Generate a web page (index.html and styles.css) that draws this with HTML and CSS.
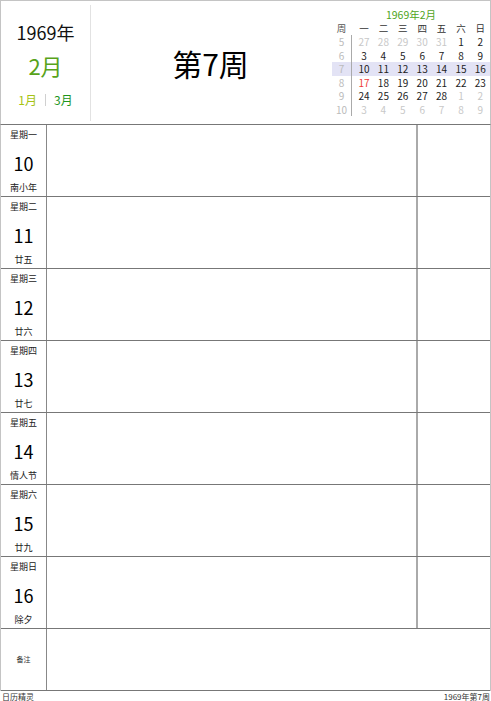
FILE: index.html
```html
<!DOCTYPE html>
<html lang="zh">
<head>
<meta charset="utf-8">
<title>1969年第7周</title>
<link rel="stylesheet" href="styles.css">
</head>
<body>
<div class="page">
  <div class="header">
    <div class="month-box">
      <div class="year">1969年</div>
      <div class="month">2月</div>
      <div class="nav"><span class="prev">1月</span><span class="sep"></span><span class="next">3月</span></div>
    </div>
    <div class="week-title">第7周</div>
    <div class="mini-cal">
      <div class="cal-title">1969年2月</div>
      <div class="cal-row cal-head"><span class="wk">周</span><span class="d">一</span><span class="d">二</span><span class="d">三</span><span class="d">四</span><span class="d">五</span><span class="d">六</span><span class="d">日</span></div>
      <div class="cal-row"><span class="wk">5</span><span class="d out">27</span><span class="d out">28</span><span class="d out">29</span><span class="d out">30</span><span class="d out">31</span><span class="d">1</span><span class="d">2</span></div>
      <div class="cal-row"><span class="wk">6</span><span class="d">3</span><span class="d">4</span><span class="d">5</span><span class="d">6</span><span class="d">7</span><span class="d">8</span><span class="d">9</span></div>
      <div class="cal-row current"><span class="wk">7</span><span class="d">10</span><span class="d">11</span><span class="d">12</span><span class="d">13</span><span class="d">14</span><span class="d">15</span><span class="d">16</span></div>
      <div class="cal-row"><span class="wk">8</span><span class="d holiday">17</span><span class="d">18</span><span class="d">19</span><span class="d">20</span><span class="d">21</span><span class="d">22</span><span class="d">23</span></div>
      <div class="cal-row"><span class="wk">9</span><span class="d">24</span><span class="d">25</span><span class="d">26</span><span class="d">27</span><span class="d">28</span><span class="d out">1</span><span class="d out">2</span></div>
      <div class="cal-row"><span class="wk">10</span><span class="d out">3</span><span class="d out">4</span><span class="d out">5</span><span class="d out">6</span><span class="d out">7</span><span class="d out">8</span><span class="d out">9</span></div>
    </div>
  </div>
  <div class="table">
    <div class="row">
      <div class="label"><div class="wd">星期一</div><div class="num">10</div><div class="lunar">南小年</div></div>
      <div class="main"></div><div class="side"></div>
    </div>
    <div class="row">
      <div class="label"><div class="wd">星期二</div><div class="num">11</div><div class="lunar">廿五</div></div>
      <div class="main"></div><div class="side"></div>
    </div>
    <div class="row">
      <div class="label"><div class="wd">星期三</div><div class="num">12</div><div class="lunar">廿六</div></div>
      <div class="main"></div><div class="side"></div>
    </div>
    <div class="row">
      <div class="label"><div class="wd">星期四</div><div class="num">13</div><div class="lunar">廿七</div></div>
      <div class="main"></div><div class="side"></div>
    </div>
    <div class="row">
      <div class="label"><div class="wd">星期五</div><div class="num">14</div><div class="lunar">情人节</div></div>
      <div class="main"></div><div class="side"></div>
    </div>
    <div class="row">
      <div class="label"><div class="wd">星期六</div><div class="num">15</div><div class="lunar">廿九</div></div>
      <div class="main"></div><div class="side"></div>
    </div>
    <div class="row">
      <div class="label"><div class="wd">星期日</div><div class="num">16</div><div class="lunar">除夕</div></div>
      <div class="main"></div><div class="side"></div>
    </div>
    <div class="row notes">
      <div class="label"><div class="note-label">备注</div></div>
      <div class="main"></div>
    </div>
  </div>
  <div class="footer"><span>日历精灵</span><span>1969年第7周</span></div>
</div>
</body>
</html>
```
FILE: styles.css
```css
* { box-sizing: border-box; }
html, body { margin: 0; padding: 0; background: #fff; }
body {
  font-family: "Noto Sans CJK SC", "Noto Sans", sans-serif;
  color: #111;
  width: 491px;
  height: 701px;
  overflow: hidden;
}
.page {
  width: 491px;
}
.header {
  display: flex;
  height: 124px;
  border: 1px solid #c4c4c4;
  border-bottom: none;
}
.month-box {
  width: 90px;
  margin: 4px 0 3px;
  border-right: 1px solid #e2e2e2;
  display: flex;
  flex-direction: column;
  align-items: center;
  padding-top: 15px;
}
.year {
  font-size: 18px;
  line-height: 24px;
  color: #111;
}
.month {
  font-size: 22px;
  line-height: 30px;
  margin-top: 6px;
  color: #58a31a;
}
.nav {
  display: flex;
  align-items: center;
  margin-top: 12px;
  font-size: 12px;
  line-height: 16px;
}
.prev { color: #a6c414; }
.next { color: #1d961d; }
.sep {
  display: inline-block;
  width: 1px;
  height: 12px;
  background: #d0d0d0;
  margin: 0 8px;
}
.week-title {
  flex: 1;
  display: flex;
  align-items: center;
  justify-content: center;
  font-size: 30px;
  padding-top: 1px;
  padding-right: 2px;
  color: #000;
}
.mini-cal {
  width: 158px;
  padding-top: 6px;
  font-size: 10px;
}
.cal-title {
  text-align: center;
  color: #4fa51c;
  font-size: 10.5px;
  line-height: 14px;
  padding-top: 1px;
}
.cal-row {
  display: flex;
  height: 13.5px;
  line-height: 13.5px;
}
.cal-head {
  font-size: 9.5px;
  height: 13px;
  line-height: 13px;
}
.cal-row .wk {
  width: 20px;
  text-align: center;
  color: #bbb;
  border-right: 1px solid #aaa;
  margin-right: 2.3px;
}
.cal-head .wk {
  border-right-color: transparent;
  color: #555;
}
.cal-row .d {
  width: 19.4px;
  text-align: center;
  color: #222;
}
.cal-head .d { color: #333; }
.cal-row .d.out { color: #c8c8c8; }
.cal-row .d.holiday { color: #f03a3a; }
.cal-row.current { background: #e3e3f5; }
.table {
  border: 1px solid #c4c4c4;
  border-top: 1px solid #777;
  border-bottom: none;
}
.row {
  display: flex;
  height: 72px;
  border-bottom: 1px solid #777;
}
.row.notes { height: 62px; }
.label {
  width: 46px;
  border-right: 1px solid #888;
  display: flex;
  flex-direction: column;
  align-items: center;
}
.wd {
  font-size: 9px;
  line-height: 20px;
  color: #222;
}
.num {
  font-size: 18px;
  line-height: 36px;
  color: #000;
}
.lunar {
  font-size: 9px;
  line-height: 14px;
  color: #222;
}
.note-label {
  font-size: 7px;
  line-height: 61px;
  color: #333;
}
.main {
  width: 371px;
  border-right: 2px solid #aaa;
}
.notes .main { border-right: none; flex: 1; }
.side { flex: 1; }
.footer {
  display: flex;
  justify-content: space-between;
  padding: 2px 1px 0 2px;
  font-size: 8px;
  line-height: 8px;
  color: #333;
}
```
